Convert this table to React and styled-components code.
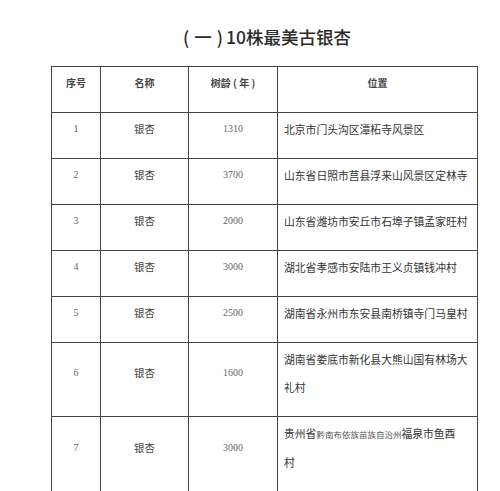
import React from 'react';
import styled, { createGlobalStyle } from 'styled-components';

const rows = [
  { no: '1', name: '银杏', age: '1310', place: ['北京市门头沟区潭柘寺风景区'] },
  { no: '2', name: '银杏', age: '3700', place: ['山东省日照市莒县浮来山风景区定林寺'] },
  { no: '3', name: '银杏', age: '2000', place: ['山东省潍坊市安丘市石埠子镇孟家旺村'] },
  { no: '4', name: '银杏', age: '3000', place: ['湖北省孝感市安陆市王义贞镇钱冲村'] },
  { no: '5', name: '银杏', age: '2500', place: ['湖南省永州市东安县南桥镇寺门马皇村'] },
  { no: '6', name: '银杏', age: '1600', place: ['湖南省娄底市新化县大熊山国有林场大', '礼村'] },
  { no: '7', name: '银杏', age: '3000', place: 'guizhou' },
];

export default function App() {
  return (
    <Page>
      <GlobalStyle />
      <Title>
        (<Dash>一</Dash>)<Gap />10株最美古银杏
      </Title>
      <Table>
        <colgroup>
          <col style={{ width: 49 }} />
          <col style={{ width: 88 }} />
          <col style={{ width: 89 }} />
          <col style={{ width: 200 }} />
        </colgroup>
        <thead>
          <tr>
            <Th>序号</Th>
            <Th>名称</Th>
            <Th>树龄 ( 年 )</Th>
            <Th>位置</Th>
          </tr>
        </thead>
        <tbody>
          {rows.map(r => (
            <tr key={r.no}>
              <NumCell>{r.no}</NumCell>
              <NameCell>{r.name}</NameCell>
              <NumCell>{r.age}</NumCell>
              <PlaceCell>
                {r.place === 'guizhou' ? (
                  <>
                    <Line>贵州省<Small>黔南布依族苗族自治州</Small>福泉市鱼酉</Line>
                    <Line>村</Line>
                  </>
                ) : (
                  r.place.map((l, i) => <Line key={i}>{l}</Line>)
                )}
              </PlaceCell>
            </tr>
          ))}
        </tbody>
      </Table>
    </Page>
  );
}

const GlobalStyle = createGlobalStyle`
  html, body {
    margin: 0;
    background: #ffffff;
  }
`;

const Page = styled.div`
  width: 500px;
  height: 491px;
  overflow: hidden;
  font-family: "Noto Sans CJK SC", "Noto Sans", sans-serif;
  color: #333;
`;

const Title = styled.div`
  padding-top: 25px;
  padding-left: 34px;
  height: 66px;
  box-sizing: border-box;
  text-align: center;
  font-size: 17.5px;
  line-height: 24px;
  font-weight: 500;
  color: #2a2a2a;
  white-space: nowrap;
`;

const Dash = styled.span`
  margin: 0 5px;
`;

const Gap = styled.span`
  display: inline-block;
  width: 3px;
`;

const Table = styled.table`
  margin-left: 51px;
  margin-top: 0;
  width: 426px;
  table-layout: fixed;
  border-collapse: collapse;
  border: 1px solid #555;
`;

const Cell = styled.td`
  border: 1px solid #444;
  padding: 2px 4px 15px 4px;
  line-height: 28px;
  vertical-align: middle;
  text-align: center;
`;

const Th = styled(Cell).attrs({ as: 'th' })`
  vertical-align: top;
  font-size: 10px;
  font-weight: 700;
  color: #444;
  white-space: nowrap;
`;

const NumCell = styled(Cell)`
  font-family: "Liberation Serif", serif;
  font-size: 10px;
  color: #666;
`;

const NameCell = styled(Cell)`
  font-size: 10.5px;
  color: #444;
`;

const PlaceCell = styled(Cell)`
  text-align: left;
  vertical-align: top;
  padding-left: 6px;
  padding-right: 2px;
  font-size: 10.8px;
  color: #333;
`;

const Line = styled.div`
  white-space: nowrap;
`;

const Small = styled.span`
  font-size: 8.5px;
  color: #555;
`;
